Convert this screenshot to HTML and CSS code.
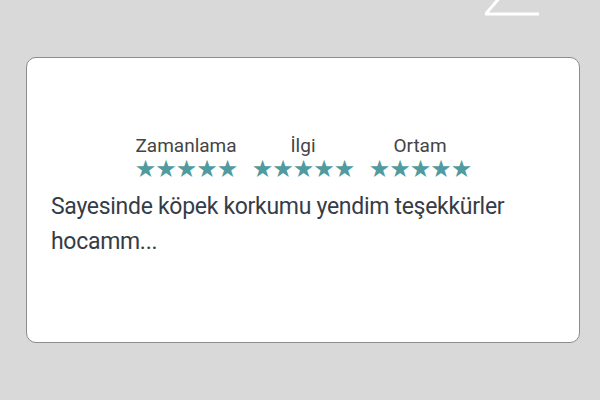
FILE: index.html
```html
<!DOCTYPE html>
<html>
<head>
    <title>Yorum</title>
    <link rel="stylesheet" href="styles.css">
</head>
<body>
    <svg class="back-arrow" width="60" height="20" viewBox="0 0 60 20">
        <path d="M20 -5 L4 13.5 M3 14 H57" stroke="#fff" stroke-width="3" fill="none"/>
    </svg>

    <div class="review-card">
        <div class="ratings">
            <div class="rating">
                <span class="rating-label">Zamanlama</span>
                <span class="stars">★★★★★</span>
            </div>
            <div class="rating">
                <span class="rating-label">İlgi</span>
                <span class="stars">★★★★★</span>
            </div>
            <div class="rating">
                <span class="rating-label">Ortam</span>
                <span class="stars">★★★★★</span>
            </div>
        </div>
        <p class="review-text">Sayesinde köpek korkumu yendim teşekkürler hocamm...</p>
    </div>
</body>
</html>
```

FILE: styles.css
```css
body {
    margin: 0;
    width: 600px;
    height: 400px;
    background-color: #d9d9d9;
    font-family: Roboto, "Noto Sans", sans-serif;
    position: relative;
    overflow: hidden;
}
.back-arrow {
    position: absolute;
    left: 482px;
    top: 0;
}
.review-card {
    position: absolute;
    left: 26px;
    top: 57px;
    width: 554px;
    height: 286px;
    box-sizing: border-box;
    background-color: white;
    border: 1px solid #8c8c8c;
    border-radius: 10px;
    padding: 76px 24px 0 24px;
}
.ratings {
    display: flex;
    justify-content: center;
    gap: 16px;
}
.rating {
    display: flex;
    flex-direction: column;
    align-items: center;
    width: 101px;
}
.rating-label {
    font-size: 19px;
    color: #444;
    line-height: 23px;
}
.stars {
    font-family: "DejaVu Sans", sans-serif;
    color: #4f9ba0;
    font-size: 24px;
    line-height: 24px;
    letter-spacing: -1px;
}
.review-text {
    margin: 8px 0 0 0;
    font-size: 23px;
    letter-spacing: -0.3px;
    line-height: 35px;
    color: #363c46;
}
```
